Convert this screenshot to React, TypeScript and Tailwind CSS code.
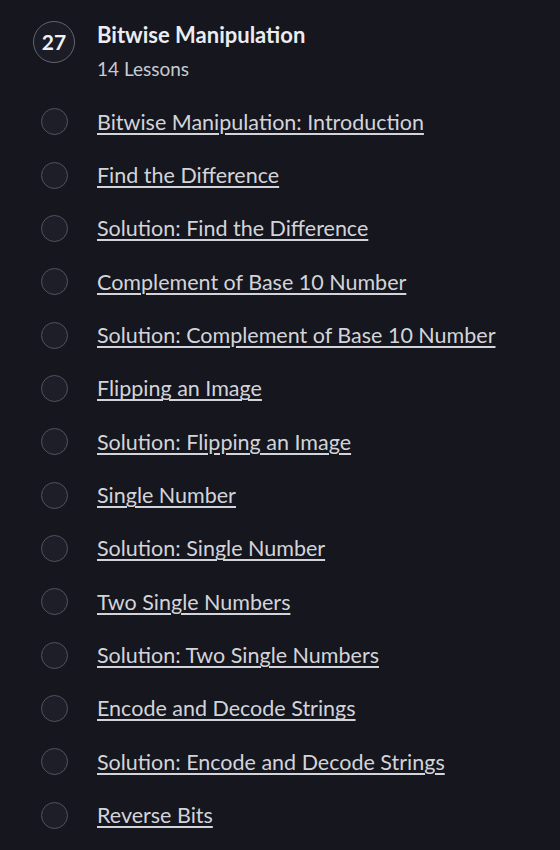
const lessons = [
  "Bitwise Manipulation: Introduction",
  "Find the Difference",
  "Solution: Find the Difference",
  "Complement of Base 10 Number",
  "Solution: Complement of Base 10 Number",
  "Flipping an Image",
  "Solution: Flipping an Image",
  "Single Number",
  "Solution: Single Number",
  "Two Single Numbers",
  "Solution: Two Single Numbers",
  "Encode and Decode Strings",
  "Solution: Encode and Decode Strings",
  "Reverse Bits",
]

export default function App() {
  return (
    <div
      className="min-h-[850px] w-[560px] bg-[#15161e] pl-[33px] pt-[21px] overflow-hidden"
      style={{ fontFamily: '"Lato", "Noto Sans", sans-serif' }}
    >
      <div className="flex items-start gap-[22px]">
        <div className="flex h-[42px] w-[42px] shrink-0 items-center justify-center rounded-full border border-[#62646e] bg-[#1b1c25] text-[21px] font-bold text-[#f1f1f4]">
          27
        </div>
        <div>
          <h2 className="text-[22px] font-bold leading-[28px] text-[#ececf0]">Bitwise Manipulation</h2>
          <p className="mt-2 text-[19px] leading-[24px] text-[#c9cad0]">14 Lessons</p>
        </div>
      </div>

      <ul className="mt-[14px]">
        {lessons.map((title) => (
          <li key={title} className="flex h-[53.35px] items-center">
            <span className="ml-[8px] h-[27px] w-[27px] shrink-0 rounded-full border border-[#52545d] bg-[#1d1e27]" />
            <a
              href="#"
              className="ml-[29px] text-[21.5px] leading-[28px] text-[#d3d4d9] underline decoration-[#d3d4d9] decoration-2 underline-offset-[3px]"
            >
              {title}
            </a>
          </li>
        ))}
      </ul>
    </div>
  )
}
